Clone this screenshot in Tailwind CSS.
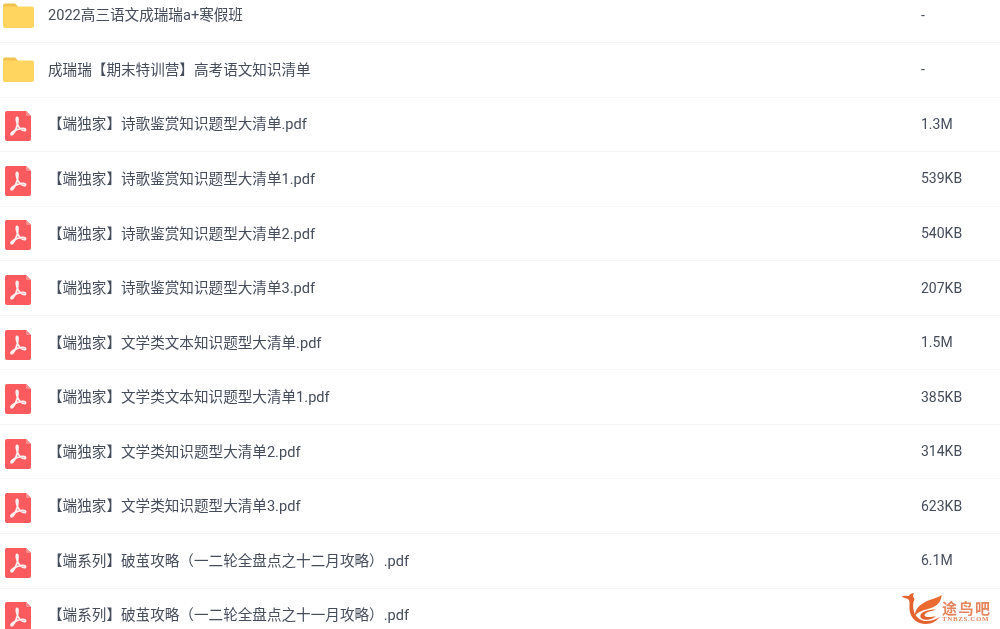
<!DOCTYPE html>
<html lang="en">
<head>
    <meta charset="UTF-8">
    <title>文件列表</title>
    <script src="https://cdn.jsdelivr.net/npm/@tailwindcss/browser@4"></script>
</head>
<body class="h-[629px] w-[1000px] overflow-hidden bg-white relative font-['Roboto','Noto_Sans_CJK_SC',sans-serif] text-[14.6px] text-[#454d5b]">

    <!-- shared icons -->
    <svg width="0" height="0" class="absolute">
        <symbol id="folder" viewBox="0 0 31 25">
            <path d="M0 2.5A2 2 0 0 1 2 .5h9.5a2 2 0 0 1 1.6.8L15 4H0z" fill="#f0c350"/>
            <rect x="0" y="3.5" width="31" height="21.5" rx="2" fill="#ffd55f"/>
        </symbol>
        <symbol id="pdf" viewBox="0 0 26 30">
            <path d="M2 0h19l5 5v23a2 2 0 0 1-2 2H2a2 2 0 0 1-2-2V2a2 2 0 0 1 2-2z" fill="#fb5a5f"/>
            <path d="M21 0l5 5h-3.500a1.500 1.500 0 0 1-1.500-1.500z" fill="#fd8f91"/>
            <path d="M12 6.500c-1.200 0-.8 4 .8 7.500c1.500 3.200 4 5.600 6.700 5.600c1.600 0 1.400-2-.8-2.200c-3.500-.4-9 1.400-12 4.300c-1.500 1.500-.5 2.800 1 1.500c2.500-2.200 5.300-9 5.300-14.700c0-1.300-.2-2-1-2z" fill="none" stroke="#fff" stroke-opacity=".9" stroke-width="1.800" stroke-linejoin="round"/>
        </symbol>
    </svg>

    <!-- File list -->
    <div class="blur-[0.4px] -mt-[11.5px] flex flex-col">
        <div class="h-[54.55px] flex items-center border-b border-[#f4f5f6]">
            <div class="w-[48px] pl-[3px] shrink-0"><svg class="w-[31px] h-[25px] block"><use href="#folder"/></svg></div>
            <div class="flex-1 pt-[2px]">2022高三语文成瑞瑞a+寒假班</div>
            <div class="w-[79px] text-[14px]">-</div>
        </div>
        <div class="h-[54.55px] flex items-center border-b border-[#f4f5f6]">
            <div class="w-[48px] pl-[3px] shrink-0"><svg class="w-[31px] h-[25px] block"><use href="#folder"/></svg></div>
            <div class="flex-1 pt-[2px]">成瑞瑞【期末特训营】高考语文知识清单</div>
            <div class="w-[79px] text-[14px]">-</div>
        </div>
        <div class="h-[54.55px] flex items-center border-b border-[#f4f5f6]">
            <div class="w-[48px] pl-[5px] pt-[4px] shrink-0"><svg class="w-[26px] h-[30px] block"><use href="#pdf"/></svg></div>
            <div class="flex-1 pt-[2px]">【端独家】诗歌鉴赏知识题型大清单.pdf</div>
            <div class="w-[79px] text-[14px]">1.3M</div>
        </div>
        <div class="h-[54.55px] flex items-center border-b border-[#f4f5f6]">
            <div class="w-[48px] pl-[5px] pt-[4px] shrink-0"><svg class="w-[26px] h-[30px] block"><use href="#pdf"/></svg></div>
            <div class="flex-1 pt-[2px]">【端独家】诗歌鉴赏知识题型大清单1.pdf</div>
            <div class="w-[79px] text-[14px]">539KB</div>
        </div>
        <div class="h-[54.55px] flex items-center border-b border-[#f4f5f6]">
            <div class="w-[48px] pl-[5px] pt-[4px] shrink-0"><svg class="w-[26px] h-[30px] block"><use href="#pdf"/></svg></div>
            <div class="flex-1 pt-[2px]">【端独家】诗歌鉴赏知识题型大清单2.pdf</div>
            <div class="w-[79px] text-[14px]">540KB</div>
        </div>
        <div class="h-[54.55px] flex items-center border-b border-[#f4f5f6]">
            <div class="w-[48px] pl-[5px] pt-[4px] shrink-0"><svg class="w-[26px] h-[30px] block"><use href="#pdf"/></svg></div>
            <div class="flex-1 pt-[2px]">【端独家】诗歌鉴赏知识题型大清单3.pdf</div>
            <div class="w-[79px] text-[14px]">207KB</div>
        </div>
        <div class="h-[54.55px] flex items-center border-b border-[#f4f5f6]">
            <div class="w-[48px] pl-[5px] pt-[4px] shrink-0"><svg class="w-[26px] h-[30px] block"><use href="#pdf"/></svg></div>
            <div class="flex-1 pt-[2px]">【端独家】文学类文本知识题型大清单.pdf</div>
            <div class="w-[79px] text-[14px]">1.5M</div>
        </div>
        <div class="h-[54.55px] flex items-center border-b border-[#f4f5f6]">
            <div class="w-[48px] pl-[5px] pt-[4px] shrink-0"><svg class="w-[26px] h-[30px] block"><use href="#pdf"/></svg></div>
            <div class="flex-1 pt-[2px]">【端独家】文学类文本知识题型大清单1.pdf</div>
            <div class="w-[79px] text-[14px]">385KB</div>
        </div>
        <div class="h-[54.55px] flex items-center border-b border-[#f4f5f6]">
            <div class="w-[48px] pl-[5px] pt-[4px] shrink-0"><svg class="w-[26px] h-[30px] block"><use href="#pdf"/></svg></div>
            <div class="flex-1 pt-[2px]">【端独家】文学类知识题型大清单2.pdf</div>
            <div class="w-[79px] text-[14px]">314KB</div>
        </div>
        <div class="h-[54.55px] flex items-center border-b border-[#f4f5f6]">
            <div class="w-[48px] pl-[5px] pt-[4px] shrink-0"><svg class="w-[26px] h-[30px] block"><use href="#pdf"/></svg></div>
            <div class="flex-1 pt-[2px]">【端独家】文学类知识题型大清单3.pdf</div>
            <div class="w-[79px] text-[14px]">623KB</div>
        </div>
        <div class="h-[54.55px] flex items-center border-b border-[#f4f5f6]">
            <div class="w-[48px] pl-[5px] pt-[4px] shrink-0"><svg class="w-[26px] h-[30px] block"><use href="#pdf"/></svg></div>
            <div class="flex-1 pt-[2px]">【端系列】破茧攻略（一二轮全盘点之十二月攻略）.pdf</div>
            <div class="w-[79px] text-[14px]">6.1M</div>
        </div>
        <div class="h-[54.55px] flex items-center border-b border-[#f4f5f6]">
            <div class="w-[48px] pl-[5px] pt-[4px] shrink-0"><svg class="w-[26px] h-[30px] block"><use href="#pdf"/></svg></div>
            <div class="flex-1 pt-[2px]">【端系列】破茧攻略（一二轮全盘点之十一月攻略）.pdf</div>
            <div class="w-[79px]"></div>
        </div>
    </div>

    <!-- Watermark -->
    <div class="blur-[0.3px] absolute left-[900px] top-[590px] flex items-end">
        <svg width="44" height="36" viewBox="0 0 44 36" class="block">
            <path d="M1.700 6.700C5 5 7 6 9 6C10 4 12 3 14 3.500C12.500 5 13 7 14.500 9C13 12 12.500 17 14 22C16 28 22 31.500 28 31C33 30.500 37 29 40 26.500C37 31 32 34 26 34C17 34 10 28 9.500 19C9.300 15 10 12 9 10C7 8 4 8 1.700 6.700z" fill="#e4622e"/>
            <path d="M41.700 5C41 12 37 16 31 18C25 20 18 21 15 26C14.500 20 19 15 26 11.500C32 8.500 38 8 41.700 5z" fill="#ea6a32"/>
            <path d="M36 19.500C30 19.500 22 21 20.500 25C19.500 28.500 24 30.500 29 29.500C32 29 34.500 27.500 36 26C32 27 28 27.500 25.500 26.500C23.500 25.500 25 23 28 22C31 21 34 20.500 36 19.500z" fill="#e4622e"/>
        </svg>
        <div class="flex flex-col items-start gap-[1px] -ml-[2px] mb-[3px] text-[#e58560]">
            <div class="text-[15px] leading-[15px] font-bold tracking-[1.500px] font-['Noto_Sans_CJK_SC',sans-serif]">途鸟吧</div>
            <div class="text-[7px] leading-[7px] font-bold tracking-[0.600px] font-['Liberation_Serif',serif]">TNBZS.COM</div>
        </div>
    </div>
</body>
</html>
